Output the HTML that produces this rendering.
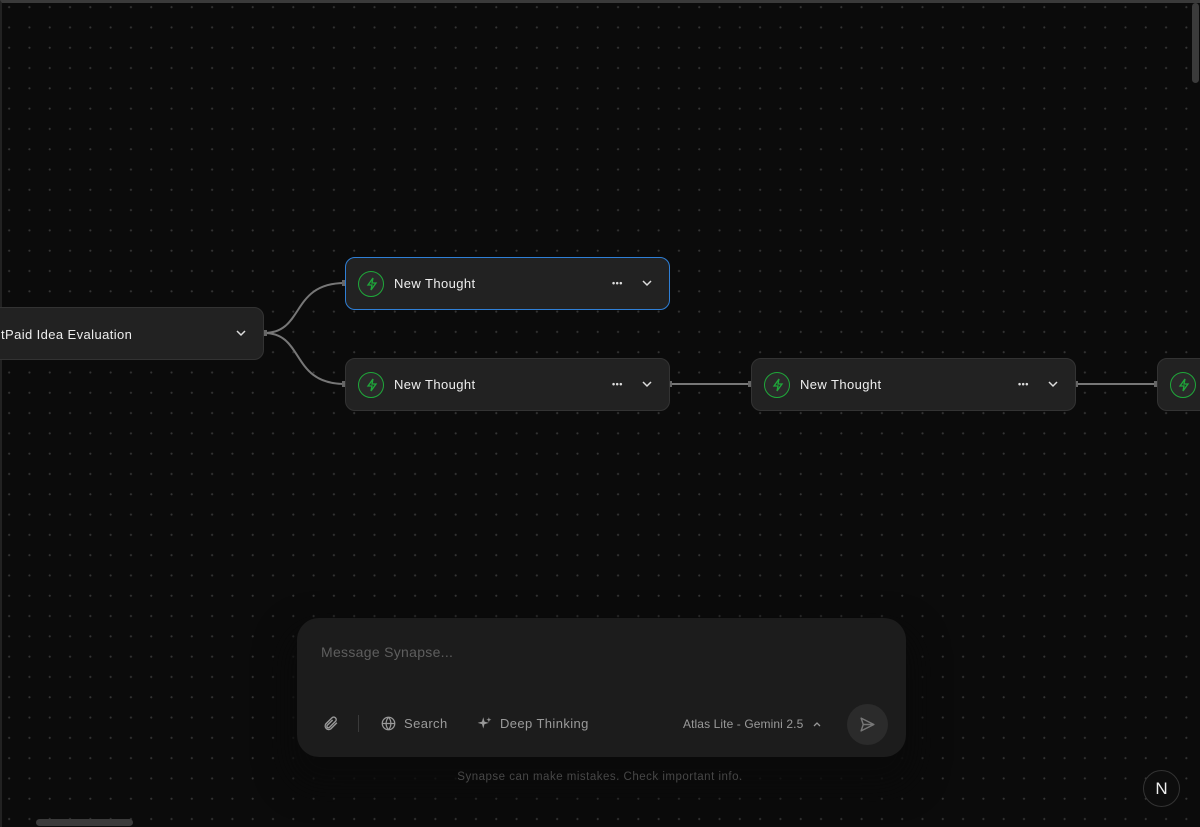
<!DOCTYPE html>
<html><head><meta charset="utf-8"><style>
*{margin:0;padding:0;box-sizing:border-box}
html,body{width:1200px;height:827px;overflow:hidden;background:#0b0b0b;font-family:"Liberation Sans",sans-serif}
.canvas{position:absolute;left:0;top:0;width:1200px;height:827px;background-color:#0b0b0b;background-image:radial-gradient(circle,#353535 0.9px,transparent 1.2px);background-size:20.3px 20.3px;background-position:-3px -6px;border-top:3px solid #3a3a3a;border-left:2px solid #222}
.node{position:absolute;height:53px;background:#222;border:1px solid #333;border-radius:10px;color:#eee;font-size:13px;letter-spacing:0.4px}
.node.sel{border-color:#2f7fd6}
.ic{position:absolute;left:12px;top:13px;width:26px;height:26px;border-radius:50%;border:1.5px solid #1fa83a;background:#2a2a2a}
.lbl{position:absolute;left:48px;top:18px}
.dots{position:absolute;left:266px;top:20px;font-size:9px;letter-spacing:0.5px;color:#ddd;font-weight:bold}
.chev{position:absolute;left:295px;top:19px}
.input{position:absolute;left:297px;top:618px;width:609px;height:139px;background:#1c1c1c;border-radius:22px;box-shadow:0 20px 30px 12px #0a0a0a}
.input .ph{position:absolute;left:24px;top:26px;color:#5e5e5e;font-size:14px;letter-spacing:0.3px}
.tool{position:absolute;top:98px;color:#9a9a9a;font-size:13px;letter-spacing:0.4px}
.send{position:absolute;left:550px;top:86px;width:41px;height:41px;border-radius:50%;background:#2b2b2b}
.foot{position:absolute;left:0;width:1200px;top:771px;text-align:center;color:#474747;font-size:11.5px;letter-spacing:0.5px}
</style></head><body>
<div class="canvas"></div>
<svg style="position:absolute;left:0;top:0" width="1200" height="827">
<g stroke="#777" stroke-width="2" fill="none">
<path d="M264 333 C305 333 290 283 345 283"/>
<path d="M264 333 C305 333 290 384 345 384"/>
<path d="M669 384 L751 384"/>
<path d="M1075 384 L1157 384"/>
</g>
<g fill="#666"><rect x="263" y="330" width="4" height="6"/><rect x="342" y="280" width="4" height="6"/><rect x="342" y="381" width="4" height="6"/><rect x="668" y="381" width="4" height="6"/><rect x="748" y="381" width="4" height="6"/><rect x="1074" y="381" width="4" height="6"/><rect x="1154" y="381" width="4" height="6"/></g>
</svg>
<div class="node" style="left:-40px;top:307px;width:304px"><span class="lbl" style="left:40px;top:19px">tPaid Idea Evaluation</span><svg class="chev" style="left:274px" width="12" height="12" viewBox="0 0 12 12"><path d="M2 4l4 4 4-4" stroke="#ddd" stroke-width="1.5" fill="none"/></svg></div>
<div class="node sel" style="left:345px;top:257px;width:325px"><div class="ic"></div><svg style="position:absolute;left:19px;top:19px" width="14" height="14" viewBox="0 0 14 14"><path d="M8 1L3 8h4l-1 5 5-7H7z" stroke="#1fa83a" stroke-width="1.3" fill="none"/></svg><span class="lbl">New Thought</span><span class="dots">•••</span><svg class="chev" width="12" height="12" viewBox="0 0 12 12"><path d="M2 4l4 4 4-4" stroke="#ddd" stroke-width="1.5" fill="none"/></svg></div>
<div class="node" style="left:345px;top:358px;width:325px"><div class="ic"></div><svg style="position:absolute;left:19px;top:19px" width="14" height="14" viewBox="0 0 14 14"><path d="M8 1L3 8h4l-1 5 5-7H7z" stroke="#1fa83a" stroke-width="1.3" fill="none"/></svg><span class="lbl">New Thought</span><span class="dots">•••</span><svg class="chev" width="12" height="12" viewBox="0 0 12 12"><path d="M2 4l4 4 4-4" stroke="#ddd" stroke-width="1.5" fill="none"/></svg></div>
<div class="node" style="left:751px;top:358px;width:325px"><div class="ic"></div><svg style="position:absolute;left:19px;top:19px" width="14" height="14" viewBox="0 0 14 14"><path d="M8 1L3 8h4l-1 5 5-7H7z" stroke="#1fa83a" stroke-width="1.3" fill="none"/></svg><span class="lbl">New Thought</span><span class="dots">•••</span><svg class="chev" width="12" height="12" viewBox="0 0 12 12"><path d="M2 4l4 4 4-4" stroke="#ddd" stroke-width="1.5" fill="none"/></svg></div>
<div class="node" style="left:1157px;top:358px;width:325px"><div class="ic"></div><svg style="position:absolute;left:19px;top:19px" width="14" height="14" viewBox="0 0 14 14"><path d="M8 1L3 8h4l-1 5 5-7H7z" stroke="#1fa83a" stroke-width="1.3" fill="none"/></svg></div>
<div class="input">
<div class="ph">Message Synapse...</div>
<svg style="position:absolute;left:25px;top:97px" width="17" height="17" viewBox="0 0 24 24"><path d="M21 11l-8.5 8.5a5 5 0 01-7-7L14 4a3.5 3.5 0 015 5l-8.5 8.5a2 2 0 01-3-3L15 7" stroke="#999" stroke-width="2" fill="none"/></svg>
<div style="position:absolute;left:61px;top:97px;width:1px;height:17px;background:#3a3a3a"></div>
<svg style="position:absolute;left:84px;top:98px" width="15" height="15" viewBox="0 0 24 24"><g stroke="#999" stroke-width="2" fill="none"><circle cx="12" cy="12" r="10"/><path d="M2 12h20M12 2a15 15 0 010 20M12 2a15 15 0 000 20"/></g></svg>
<span class="tool" style="left:107px">Search</span>
<svg style="position:absolute;left:180px;top:98px" width="15" height="15" viewBox="0 0 24 24"><path d="M10 2l2 7 7 2-7 2-2 7-2-7-7-2 7-2z M19 2l1 3 3 1-3 1-1 3-1-3-3-1 3-1z" fill="#999"/></svg>
<span class="tool" style="left:203px">Deep Thinking</span>
<span class="tool" style="left:386px;font-size:12px;top:99px;letter-spacing:0.1px">Atlas Lite - Gemini 2.5</span>
<svg style="position:absolute;left:515px;top:101px" width="10" height="10" viewBox="0 0 10 10"><path d="M2 7l3-3 3 3" stroke="#999" stroke-width="1.3" fill="none"/></svg>
<div class="send"><svg style="position:absolute;left:12px;top:12px" width="17" height="17" viewBox="0 0 24 24"><path d="M3 3l18 9-18 9 3-9z M6 12h15" stroke="#777" stroke-width="2" fill="none" stroke-linejoin="round"/></svg></div>
</div>
<div class="foot">Synapse can make mistakes. Check important info.</div>
<div style="position:absolute;left:1143px;top:770px;width:37px;height:37px;border-radius:50%;background:#0d0d0d;border:1px solid #333;color:#eee;font-size:17px;text-align:center;line-height:35px">N</div>
<div style="position:absolute;left:1192px;top:3px;width:7px;height:80px;border-radius:4px;background:#3b3b3b"></div>
<div style="position:absolute;left:36px;top:819px;width:97px;height:7px;border-radius:4px;background:#3b3b3b"></div>
</body></html>
